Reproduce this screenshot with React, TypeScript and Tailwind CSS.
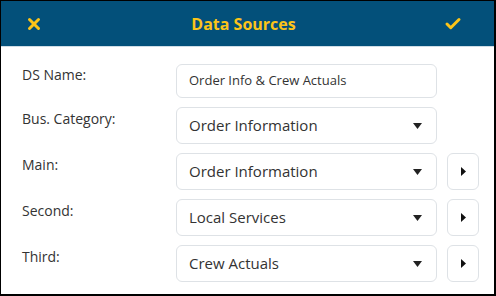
import { X, Check } from 'lucide-react'

const rows = [
  { label: 'Bus. Category:', value: 'Order Information', nav: false },
  { label: 'Main:', value: 'Order Information', nav: true },
  { label: 'Second:', value: 'Local Services', nav: true },
  { label: 'Third:', value: 'Crew Actuals', nav: true },
]

function Caret() {
  return (
    <svg width="9" height="6" viewBox="0 0 9 6" className="shrink-0">
      <path d="M0 0h9L4.5 6z" fill="#222" />
    </svg>
  )
}

export default function App() {
  return (
    <div
      className="flex h-[296px] w-[496px] flex-col border-t border-l border-r-2 border-b-2 border-black bg-white text-[#333]"
      style={{ fontFamily: '"Open Sans", "Noto Sans", sans-serif' }}
    >
      <header className="flex h-[46px] shrink-0 items-center justify-between border-b border-[#cfdde6] bg-[#03507a] pl-6 pr-[32px]">
        <X size={18} strokeWidth={4} color="#fcc419" />
        <h1 className="text-[16px] font-bold text-[#fcc419]">Data Sources</h1>
        <Check size={18} strokeWidth={4} color="#fcc419" />
      </header>

      <div className="flex flex-col gap-[9px] pt-[17px] pl-[21px]">
        <div className="flex items-start">
          <span className="w-[154px] pt-[1px] text-[14px] leading-[20px]">DS Name:</span>
          <div className="flex h-[34px] w-[261px] items-center rounded-md border border-[#dee2e6] px-3 text-[13px]">
            Order Info &amp; Crew Actuals
          </div>
        </div>

        {rows.map((r) => (
          <div key={r.label} className="flex items-start">
            <span className="w-[154px] pt-[2px] text-[14px] leading-[20px]">{r.label}</span>
            <div className="flex h-[37px] w-[261px] items-center justify-between rounded-md border border-[#dee2e6] pr-[14px] pl-3 text-[15px]">
              <span>{r.value}</span>
              <Caret />
            </div>
            {r.nav && (
              <div className="ml-[10px] flex h-[37px] w-[32px] items-center justify-center rounded-md border border-[#dee2e6]">
                <svg width="5" height="9" viewBox="0 0 5 9">
                  <path d="M0 0l5 4.5L0 9z" fill="#111" />
                </svg>
              </div>
            )}
          </div>
        ))}
      </div>
    </div>
  )
}
